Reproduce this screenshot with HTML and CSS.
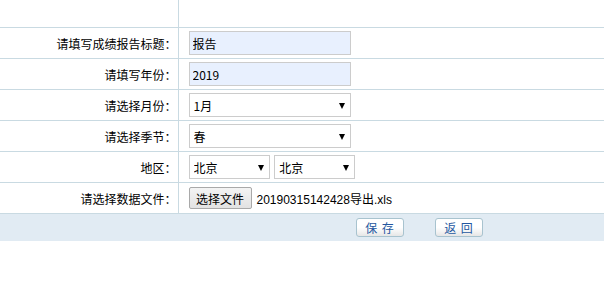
FILE: index.html
```html
<!DOCTYPE html>
<html lang="zh-CN">
<head>
	<meta charset="UTF-8">
	<title>成绩报告</title>
	<link rel="stylesheet" href="styles.css">
</head>
<body>
<table class="form-table">
	<tr class="form-table__row form-table__row--top">
		<td class="form-table__label"></td>
		<td class="form-table__field"></td>
	</tr>
	<tr class="form-table__row">
		<td class="form-table__label">请填写成绩报告标题：</td>
		<td class="form-table__field"><input class="form-input" type="text" value="报告"></td>
	</tr>
	<tr class="form-table__row">
		<td class="form-table__label">请填写年份：</td>
		<td class="form-table__field"><input class="form-input" type="text" value="2019"></td>
	</tr>
	<tr class="form-table__row">
		<td class="form-table__label">请选择月份：</td>
		<td class="form-table__field">
			<span class="form-select form-select--wide">
				<select><option>1月</option><option>2月</option></select>
			</span>
		</td>
	</tr>
	<tr class="form-table__row">
		<td class="form-table__label">请选择季节：</td>
		<td class="form-table__field">
			<span class="form-select form-select--wide">
				<select><option>春</option><option>夏</option></select>
			</span>
		</td>
	</tr>
	<tr class="form-table__row">
		<td class="form-table__label">地区：</td>
		<td class="form-table__field">
			<span class="form-select form-select--short">
				<select><option>北京</option></select>
			</span>
			<span class="form-select form-select--short form-select--second">
				<select><option>北京</option></select>
			</span>
		</td>
	</tr>
	<tr class="form-table__row">
		<td class="form-table__label">请选择数据文件：</td>
		<td class="form-table__field">
			<span class="file-picker">
				<button class="file-picker__button" type="button">选择文件</button>
				<span class="file-picker__name">20190315142428导出.xls</span>
			</span>
		</td>
	</tr>
	<tr class="form-table__footer">
		<td colspan="2">
			<div class="form-actions">
				<button class="form-actions__button" type="button">保 存</button>
				<button class="form-actions__button" type="button">返 回</button>
			</div>
		</td>
	</tr>
</table>
</body>
</html>
```

FILE: styles.css
```css
body {
    margin: 0;
    font-family: "Noto Sans CJK SC", "Liberation Sans", sans-serif;
    font-size: 12px;
    color: #000;
    background: #fff;
}

.form-table {
    width: 100%;
    border-collapse: collapse;
}

.form-table td {
    padding: 0;
}

.form-table__row td {
    height: 30px;
    border-bottom: 1px solid #c9dae2;
}

.form-table__row--top td {
    height: 27px;
}

.form-table__label {
    width: 178px;
    box-sizing: border-box;
    text-align: right;
    padding-right: 1px !important;
    border-right: 1px solid #c9dae2;
    white-space: nowrap;
}

.form-table__field {
    padding-left: 10px !important;
}

.form-input {
    display: block;
    box-sizing: border-box;
    width: 162px;
    height: 24px;
    margin: 0;
    padding: 0 3px;
    border: 1px solid #cccccc;
    background: #e8f0fe;
    font-family: inherit;
    font-size: 12px;
    color: #000;
    outline: none;
}

.form-select {
    display: inline-block;
    position: relative;
    vertical-align: middle;
}

.form-select select {
    display: block;
    box-sizing: border-box;
    height: 24px;
    margin: 0;
    padding: 0 4px;
    border: 1px solid #cccccc;
    border-radius: 0;
    background: #fff;
    font-family: inherit;
    font-size: 12px;
    color: #000;
    appearance: none;
    -webkit-appearance: none;
    outline: none;
}

.form-select::after {
    content: "";
    position: absolute;
    top: 10px;
    right: 6px;
    border-left: 3.5px solid transparent;
    border-right: 3.5px solid transparent;
    border-top: 6px solid #000;
    pointer-events: none;
}

.form-select--wide select {
    width: 162px;
}

.form-select--short select {
    width: 81px;
}

.form-select--second {
    margin-left: 2px;
}

.file-picker {
    display: flex;
    align-items: center;
    gap: 5px;
}

.file-picker__button {
    box-sizing: border-box;
    height: 22px;
    width: 63px;
    padding: 0;
    border: 1px solid #a9a9a9;
    border-radius: 2px;
    background: linear-gradient(#f4f4f4, #e2e2e2);
    font-family: inherit;
    font-size: 12px;
    color: #000;
}

.file-picker__name {
    font-family: "Liberation Sans", "Noto Sans CJK SC", sans-serif;
}

.form-table__footer td {
    height: 27px;
    background: #e1ebf3;
}

.form-actions {
    display: flex;
    gap: 31px;
    padding-left: 356px;
}

.form-actions__button {
    box-sizing: border-box;
    width: 48px;
    height: 19px;
    padding: 0;
    border: 1px solid #a8c3cf;
    border-radius: 3px;
    background: linear-gradient(#ffffff 50%, #e6e6e6);
    font-family: inherit;
    font-size: 12px;
    line-height: 17px;
    color: #2457a0;
    letter-spacing: 1px;
}
```
